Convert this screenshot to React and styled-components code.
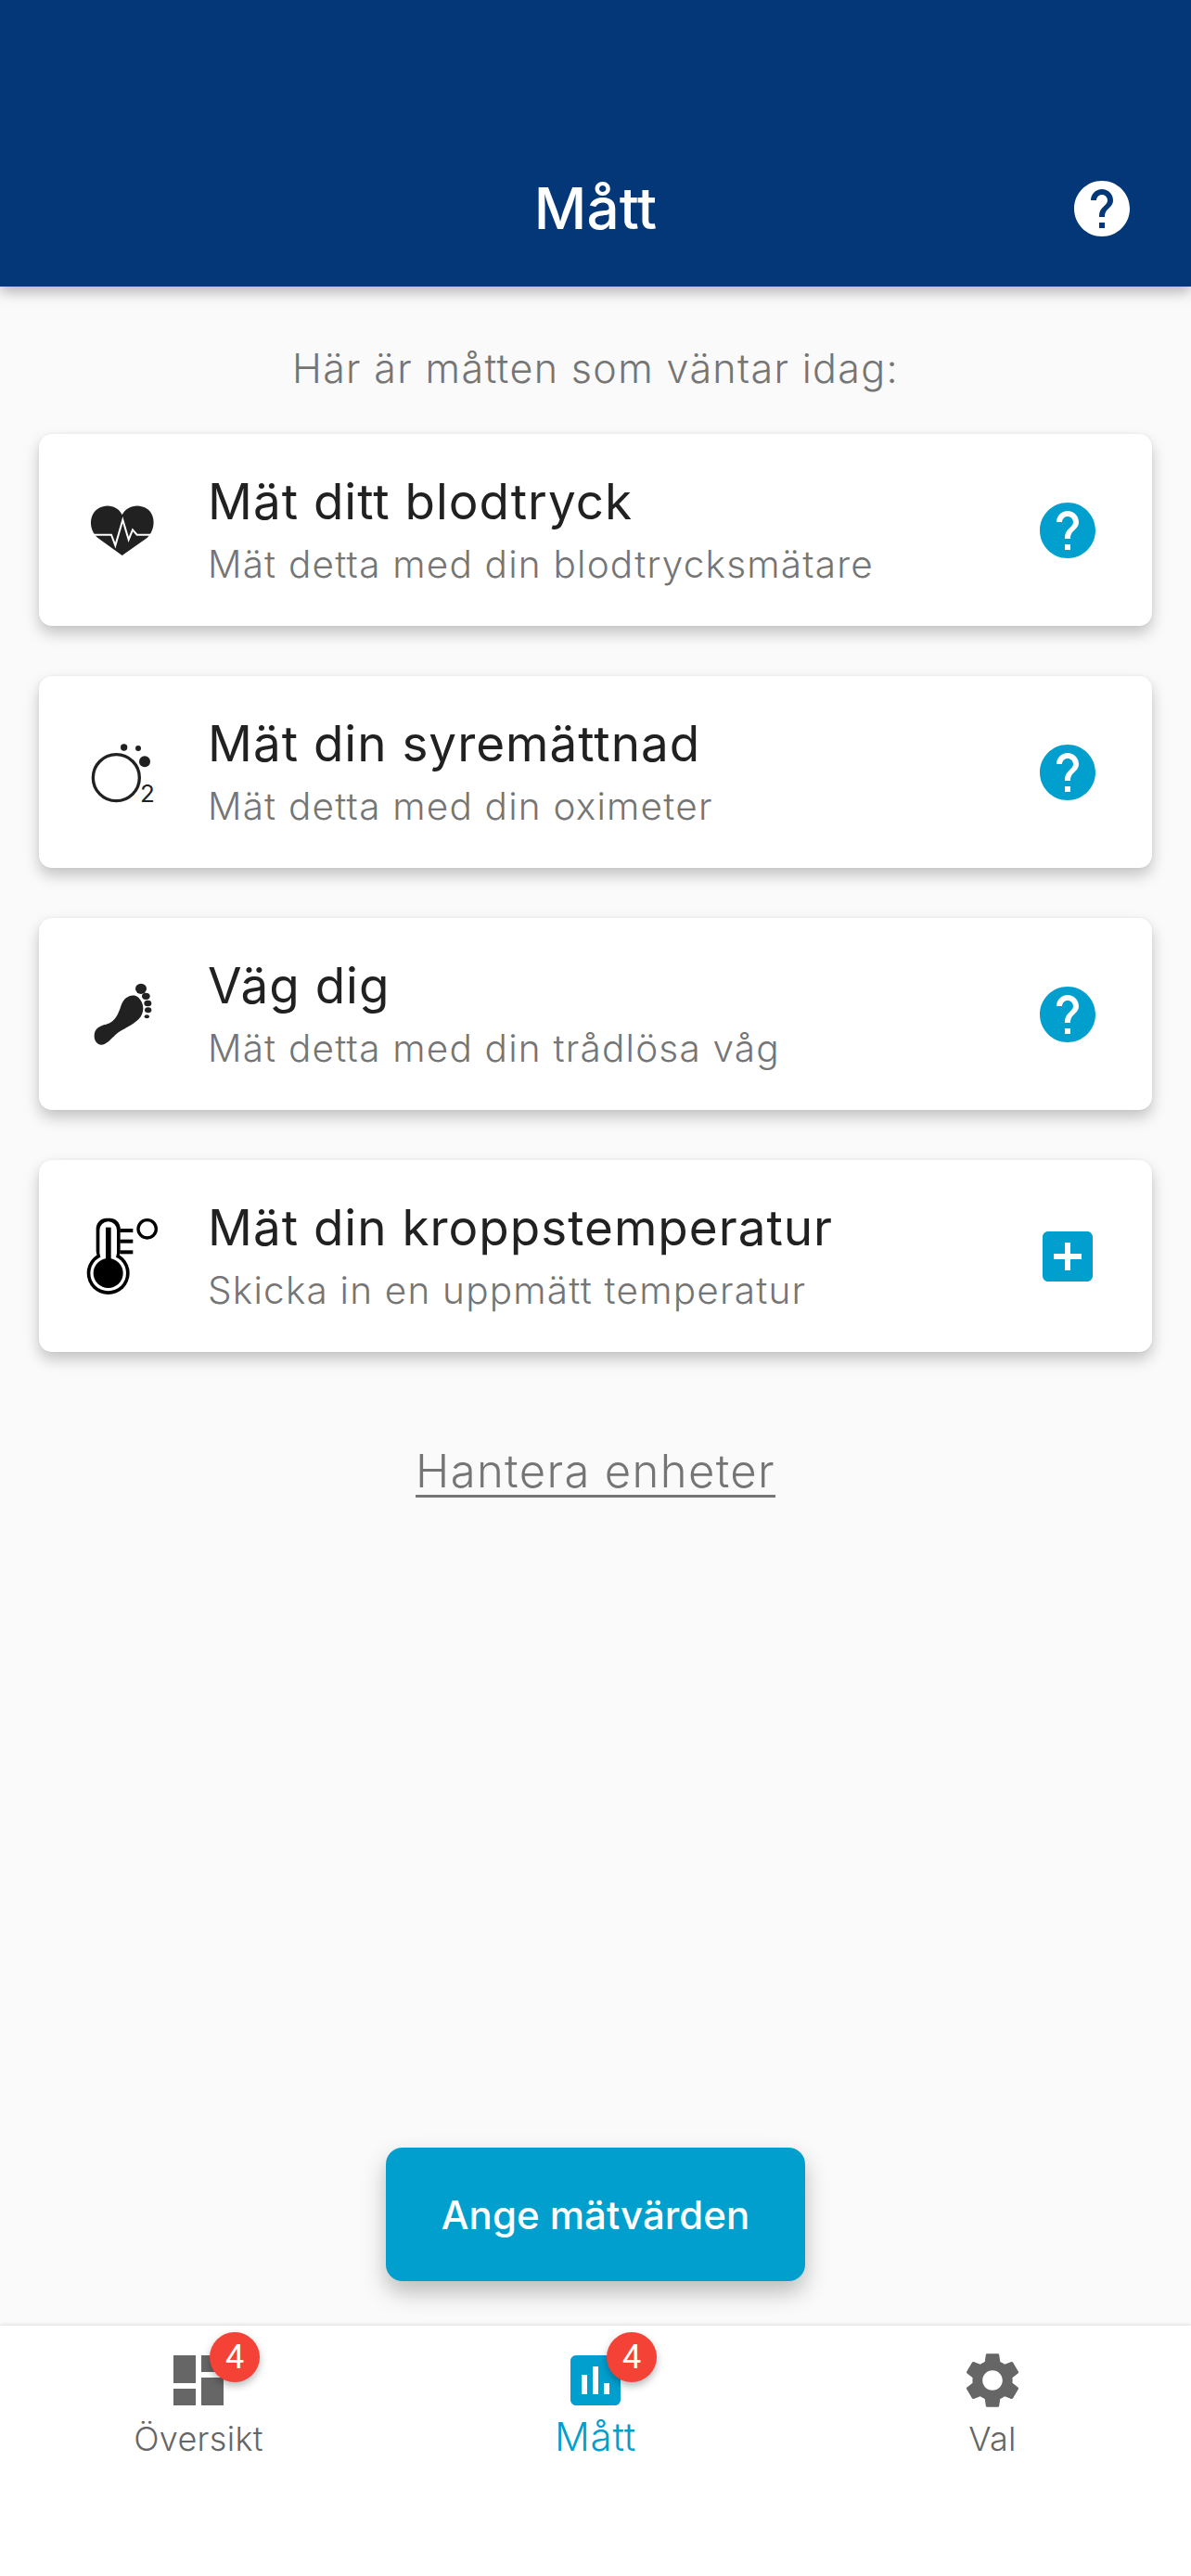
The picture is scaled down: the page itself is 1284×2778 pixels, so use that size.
import React from "react";
import styled, { createGlobalStyle } from "styled-components";

const HELP = "M12 2C6.48 2 2 6.48 2 12s4.48 10 10 10 10-4.48 10-10S17.52 2 12 2zm1 17h-2v-2h2v2zm2.07-7.75l-.9.92C13.45 12.9 13 13.5 13 15h-2v-.5c0-1.1.45-2.1 1.17-2.83l1.24-1.26c.37-.36.59-.86.59-1.41 0-1.1-.9-2-2-2s-2 .9-2 2H8c0-2.21 1.79-4 4-4s4 1.79 4 4c0 .88-.36 1.68-.93 2.25z";
const ADD_BOX = "M19 3H5c-1.11 0-2 .9-2 2v14c0 1.1.89 2 2 2h14c1.1 0 2-.9 2-2V5c0-1.1-.9-2-2-2zm-2 10h-4v4h-2v-4H7v-2h4V7h2v4h4v2z";
const DASHBOARD = "M3 13h8V3H3v10zm0 8h8v-6H3v6zm10 0h8V11h-8v10zm0-18v6h8V3h-8z";
const ASSESSMENT = "M19 3H5c-1.1 0-2 .9-2 2v14c0 1.1.9 2 2 2h14c1.1 0 2-.9 2-2V5c0-1.1-.9-2-2-2zM9 17H7v-7h2v7zm4 0h-2V7h2v10zm4 0h-2v-4h2v4z";
const SETTINGS = "M19.14,12.94c0.04-0.3,0.06-0.61,0.06-0.94c0-0.32-0.02-0.64-0.07-0.94l2.03-1.58c0.18-0.14,0.23-0.41,0.12-0.61 l-1.92-3.32c-0.12-0.22-0.37-0.29-0.59-0.22l-2.39,0.96c-0.5-0.38-1.03-0.7-1.62-0.94L14.4,2.81c-0.04-0.24-0.24-0.41-0.48-0.41 h-3.84c-0.24,0-0.43,0.17-0.47,0.41L9.25,5.35C8.66,5.59,8.12,5.92,7.63,6.29L5.24,5.33c-0.22-0.08-0.47,0-0.59,0.22L2.74,8.87 C2.62,9.08,2.66,9.34,2.86,9.48l2.03,1.58C4.84,11.36,4.8,11.69,4.8,12s0.02,0.64,0.07,0.94l-2.03,1.58 c-0.18,0.14-0.23,0.41-0.12,0.61l1.92,3.32c0.12,0.22,0.37,0.29,0.59,0.22l2.39-0.96c0.5,0.38,1.03,0.7,1.62,0.94l0.36,2.54 c0.05,0.24,0.24,0.41,0.48,0.41h3.84c0.24,0,0.44-0.17,0.47-0.41l0.36-2.54c0.59-0.24,1.13-0.56,1.62-0.94l2.39,0.96 c0.22,0.08,0.47,0,0.59-0.22l1.92-3.32c0.12-0.22,0.07-0.47-0.12-0.61L19.14,12.94z M12,15.6c-1.98,0-3.6-1.62-3.6-3.6 s1.62-3.6,3.6-3.6s3.6,1.62,3.6,3.6S13.98,15.6,12,15.6z";

const CYAN = "#009fce";

const GlobalStyle = createGlobalStyle`
  html, body {
    margin: 0;
    padding: 0;
    background: #fafafa;
  }
  * {
    box-sizing: border-box;
  }
`;

const Page = styled.div`
  display: flex;
  flex-direction: column;
  width: 1284px;
  height: 2778px;
  background: #fafafa;
  font-family: Inter, "Liberation Sans", sans-serif;
  overflow: hidden;
`;

const Header = styled.header`
  display: grid;
  grid-template-columns: 1fr auto 1fr;
  align-items: center;
  height: 309px;
  padding: 162px 60px 21px;
  background: #033778;
  box-shadow: 0 6px 14px rgba(0, 0, 0, 0.28);
`;

const HeaderTitle = styled.h1`
  grid-column: 2;
  margin: 0;
  color: #fff;
  font-size: 62px;
  font-weight: 500;
  line-height: 126px;
`;

const Icon = styled.svg`
  display: block;
  width: ${(p) => p.$size || 72}px;
  height: ${(p) => p.$size || 72}px;
  fill: ${(p) => p.$color || "currentColor"};
  flex: none;
`;

const HeaderHelp = styled.div`
  justify-self: end;
`;

const Main = styled.main`
  flex: 1;
  display: flex;
  flex-direction: column;
  padding: 58px 42px 48px;
`;

const Intro = styled.p`
  margin: 0 0 41px;
  color: #757575;
  font-size: 43px;
  font-weight: 350;
  line-height: 60px;
  letter-spacing: 1.35px;
  text-align: center;
`;

const CardList = styled.div`
  display: flex;
  flex-direction: column;
  gap: 54px;
`;

const Card = styled.div`
  display: flex;
  align-items: center;
  height: 207px;
  padding: 0 55px 0 42px;
  background: #fff;
  border-radius: 14px;
  box-shadow: 0 8px 16px rgba(0, 0, 0, 0.22), 0 0 3px rgba(0, 0, 0, 0.06);
`;

const CardGlyph = styled.svg`
  display: block;
  width: 96px;
  height: 96px;
  flex: none;
`;

const CardText = styled.div`
  flex: 1;
  margin-left: 44px;
  padding-top: 3px;
`;

const CardTitle = styled.div`
  color: #212121;
  font-size: 53px;
  font-weight: 440;
  line-height: 66px;
  letter-spacing: 1px;
`;

const CardSub = styled.div`
  margin-top: 5px;
  color: #757575;
  font-size: 40.5px;
  font-weight: 350;
  line-height: 60px;
  letter-spacing: 1.2px;
`;

const ManageLink = styled.a`
  align-self: center;
  margin-top: 99px;
  color: #757575;
  font-size: 49px;
  font-weight: 350;
  line-height: 60px;
  letter-spacing: 1.35px;
  text-decoration: underline;
  text-underline-offset: 8px;
  text-decoration-thickness: 3px;
`;

const SubmitButton = styled.button`
  align-self: center;
  width: 452px;
  height: 144px;
  margin-top: auto;
  border: 0;
  border-radius: 18px;
  background: ${CYAN};
  color: #fff;
  font-family: inherit;
  font-size: 42px;
  font-weight: 500;
  box-shadow: 0 12px 24px rgba(0, 0, 0, 0.25);
`;

const BottomNav = styled.nav`
  display: grid;
  grid-template-columns: repeat(3, 1fr);
  height: 270px;
  padding-top: 23px;
  background: #fff;
  box-shadow: 0 -1px 4px rgba(0, 0, 0, 0.12);
`;

const Tab = styled.div`
  display: flex;
  flex-direction: column;
  align-items: center;
  color: ${(p) => (p.$active ? CYAN : "#666666")};
`;

const TabIcon = styled.div`
  position: relative;
  width: 72px;
  height: 72px;
`;

const Badge = styled.span`
  position: absolute;
  top: -16px;
  left: 48px;
  width: 54px;
  height: 54px;
  border-radius: 50%;
  background: #f44336;
  color: #fff;
  font-family: Roboto, sans-serif;
  font-size: 36px;
  line-height: 54px;
  text-align: center;
  box-shadow: 0 4px 8px rgba(0, 0, 0, 0.28);
`;

const TabLabel = styled.span`
  font-size: ${(p) => (p.$active ? 42 : 36)}px;
  font-weight: 350;
  line-height: 48px;
  letter-spacing: ${(p) => (p.$active ? 0.7 : 0.3)}px;
  margin-top: ${(p) => (p.$active ? 1 : 3)}px;
`;

const MaterialIcon = ({ d, size, color }) => (
  <Icon viewBox="0 0 24 24" $size={size} $color={color}>
    <path d={d} />
  </Icon>
);

const HeartIcon = () => (
  <CardGlyph viewBox="254 250 288 288">
    <path
      fill="#212121"
      d="M397 475 L318 418 C288 392 290 345 316 326 C346 304 385 316 397 344 C410 316 450 304 480 326 C505 345 506 392 478 418 Z"
    />
    <polyline
      fill="none"
      stroke="#fff"
      strokeWidth="6"
      points="304,408 362,408 375,443 399,360 418,424 431,392 445,408 492,408"
    />
  </CardGlyph>
);

const OxygenIcon = () => (
  <CardGlyph viewBox="254 1034 288 288">
    <circle cx="378" cy="1195" r="75" fill="none" stroke="#212121" strokeWidth="10" />
    <circle cx="403" cy="1097" r="11" fill="#212121" />
    <circle cx="449" cy="1100" r="9" fill="#212121" />
    <circle cx="470" cy="1143" r="18" fill="#212121" />
    <text x="455" y="1275" fontFamily="Inter, sans-serif" fontSize="78" fill="#212121">2</text>
  </CardGlyph>
);

const FootIcon = () => (
  <CardGlyph viewBox="254 196 288 288">
    <g fill="#212121">
      <path d="M307 408 C307 386 325 376 345 372 C375 364 384 340 394 310 C403 284 430 270 450 285 C470 305 470 336 450 356 C430 376 400 386 376 405 C360 420 345 438 330 438 C315 438 306 422 307 408 Z" />
      <ellipse cx="458" cy="257" rx="18" ry="17" />
      <ellipse cx="474" cy="281" rx="13" ry="11" />
      <ellipse cx="480" cy="304" rx="12" ry="10" />
      <ellipse cx="481" cy="326" rx="11" ry="9" />
      <ellipse cx="477" cy="347" rx="8" ry="6" />
    </g>
  </CardGlyph>
);

const ThermometerIcon = () => (
  <CardGlyph viewBox="254 980 288 288">
    <g fill="#000">
      <rect x="313" y="1000" width="78" height="140" rx="34" />
      <circle cx="352" cy="1178" r="69" />
      <rect x="390" y="1034" width="42" height="12" />
      <rect x="390" y="1069" width="42" height="12" />
      <rect x="390" y="1104" width="42" height="12" />
    </g>
    <g fill="#fff">
      <rect x="324" y="1011" width="56" height="130" rx="28" />
      <circle cx="352" cy="1178" r="58" />
    </g>
    <rect x="344" y="1030" width="17" height="110" fill="#000" />
    <circle cx="352" cy="1178" r="48" fill="#000" />
    <circle cx="478" cy="1035" r="29" fill="none" stroke="#000" strokeWidth="10" />
  </CardGlyph>
);

const measures = [
  { title: "Mät ditt blodtryck", sub: "Mät detta med din blodtrycksmätare", Glyph: HeartIcon, action: HELP },
  { title: "Mät din syremättnad", sub: "Mät detta med din oximeter", Glyph: OxygenIcon, action: HELP },
  { title: "Väg dig", sub: "Mät detta med din trådlösa våg", Glyph: FootIcon, action: HELP },
  { title: "Mät din kroppstemperatur", sub: "Skicka in en uppmätt temperatur", Glyph: ThermometerIcon, action: ADD_BOX },
];

const tabs = [
  { label: "Översikt", icon: DASHBOARD, badge: 4 },
  { label: "Mått", icon: ASSESSMENT, badge: 4, active: true },
  { label: "Val", icon: SETTINGS },
];

const App = () => {
  return (
    <Page>
      <GlobalStyle />
      <Header>
        <HeaderTitle>Mått</HeaderTitle>
        <HeaderHelp>
          <MaterialIcon d={HELP} color="#fff" />
        </HeaderHelp>
      </Header>
      <Main>
        <Intro>Här är måtten som väntar idag:</Intro>
        <CardList>
          {measures.map(({ title, sub, Glyph, action }) => (
            <Card key={title}>
              <Glyph />
              <CardText>
                <CardTitle>{title}</CardTitle>
                <CardSub>{sub}</CardSub>
              </CardText>
              <MaterialIcon d={action} color={CYAN} />
            </Card>
          ))}
        </CardList>
        <ManageLink>Hantera enheter</ManageLink>
        <SubmitButton>Ange mätvärden</SubmitButton>
      </Main>
      <BottomNav>
        {tabs.map((tab) => (
          <Tab key={tab.label} $active={tab.active}>
            <TabIcon>
              <MaterialIcon d={tab.icon} />
              {tab.badge && <Badge>{tab.badge}</Badge>}
            </TabIcon>
            <TabLabel $active={tab.active}>{tab.label}</TabLabel>
          </Tab>
        ))}
      </BottomNav>
    </Page>
  );
};

export default App;
